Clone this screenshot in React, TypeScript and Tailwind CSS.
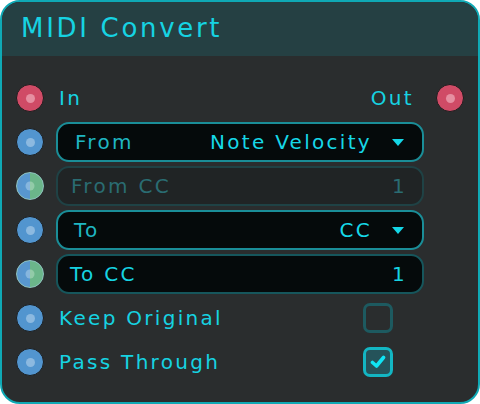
import * as React from "react";

const font = { fontFamily: '"DejaVu Sans", sans-serif' };

function Pin({ kind }: { kind: "red" | "blue" | "split" }) {
	if (kind === "split") {
		return (
			<div className="relative w-7 h-7 shrink-0 rounded-full border-[1.5px] border-[#8fc4c0] overflow-hidden bg-[linear-gradient(90deg,#5897cf_50%,#6bb68a_50%)]">
				<div className="absolute left-1/2 top-1/2 -translate-x-1/2 -translate-y-1/2 w-[9px] h-[9px] rounded-full bg-[linear-gradient(90deg,#86b6de_50%,#92cba8_50%)]" />
			</div>
		);
	}
	const outer = kind === "red" ? "bg-[#d04b66]" : "bg-[#5295cf]";
	const inner = kind === "red" ? "bg-[#e68fa1]" : "bg-[#8cb9e0]";
	return (
		<div
			className={`w-7 h-7 shrink-0 rounded-full border border-[#1b1d1e] flex items-center justify-center ${outer}`}
		>
			<div className={`w-[9px] h-[9px] rounded-full ${inner}`} />
		</div>
	);
}

function Caret() {
	return (
		<svg width="12" height="7" viewBox="0 0 12 7" className="ml-[20px]">
			<path d="M0 0h12L6 7z" fill="#14d6e6" />
		</svg>
	);
}

function Checkbox({ checked }: { checked?: boolean }) {
	if (!checked) {
		return (
			<div className="w-[30px] h-[30px] rounded-[7px] border-[3px] border-[#1d5a60] bg-[#2a2d2e]" />
		);
	}
	return (
		<div className="w-[30px] h-[30px] rounded-[7px] border-[3px] border-[#13b6c3] bg-[#25535a] flex items-center justify-center">
			<svg width="16" height="14" viewBox="0 0 16 14">
				<path
					d="M2.5 7.5 L6.5 11 L13.5 2.5"
					fill="none"
					stroke="#10e4f4"
					strokeWidth="3.6"
					strokeLinecap="round"
					strokeLinejoin="round"
				/>
			</svg>
		</div>
	);
}

export default function App() {
	return (
		<div
			className="w-[480px] h-[404px] bg-[#2a2d2e] border-2 border-[#0fa9b5] rounded-[20px] overflow-hidden flex flex-col tracking-[2.3px]"
			style={font}
		>
			{/* header */}
			<div className="h-[54px] shrink-0 bg-[#254043] flex items-center pl-[19px] pb-[2px]">
				<span className="text-[26px] text-[#16d3e2] tracking-[2.7px]">
					MIDI Convert
				</span>
			</div>

			{/* body */}
			<div className="flex flex-col gap-1 pt-[22px] px-[14px] text-[20px]">
				<div className="h-10 flex items-center gap-3">
					<Pin kind="red" />
					<div className="flex-1 flex items-center justify-between pl-[3px] pr-[10px] text-[#16d3e2]">
						<span>In</span>
						<span>Out</span>
					</div>
					<Pin kind="red" />
				</div>

				<div className="h-10 flex items-center gap-3">
					<Pin kind="blue" />
					<div className="w-[368px] h-10 rounded-[13px] border-2 border-[#1a8e98] bg-[#050a0b] flex items-center pl-[17px] pr-[18px]">
						<span className="text-[#1fb6c2]">From</span>
						<span className="ml-auto text-[#16d8e8]">Note Velocity</span>
						<Caret />
					</div>
				</div>

				<div className="h-10 flex items-center gap-3">
					<Pin kind="split" />
					<div className="w-[368px] h-10 rounded-[13px] border-2 border-[#1f4245] bg-[#202425] flex items-center pl-[13px] pr-[15px] text-[#2a6c72]">
						<span>From CC</span>
						<span className="ml-auto">1</span>
					</div>
				</div>

				<div className="h-10 flex items-center gap-3">
					<Pin kind="blue" />
					<div className="w-[368px] h-10 rounded-[13px] border-2 border-[#1a8e98] bg-[#050a0b] flex items-center pl-[16px] pr-[18px]">
						<span className="text-[#1fb6c2]">To</span>
						<span className="ml-auto text-[#16d8e8]">CC</span>
						<Caret />
					</div>
				</div>

				<div className="h-10 flex items-center gap-3">
					<Pin kind="split" />
					<div className="w-[368px] h-10 rounded-[13px] border-2 border-[#16565c] bg-[#050a0b] flex items-center pl-[12px] pr-[15px] text-[#16d3e2]">
						<span>To CC</span>
						<span className="ml-auto">1</span>
					</div>
				</div>

				<div className="h-10 flex items-center gap-3">
					<Pin kind="blue" />
					<div className="w-[368px] flex items-center pl-[3px] pr-[31px] text-[#16d3e2]">
						<span>Keep Original</span>
						<span className="ml-auto">
							<Checkbox />
						</span>
					</div>
				</div>

				<div className="h-10 flex items-center gap-3">
					<Pin kind="blue" />
					<div className="w-[368px] flex items-center pl-[3px] pr-[31px] text-[#16d3e2]">
						<span>Pass Through</span>
						<span className="ml-auto">
							<Checkbox checked />
						</span>
					</div>
				</div>
			</div>
		</div>
	);
}
